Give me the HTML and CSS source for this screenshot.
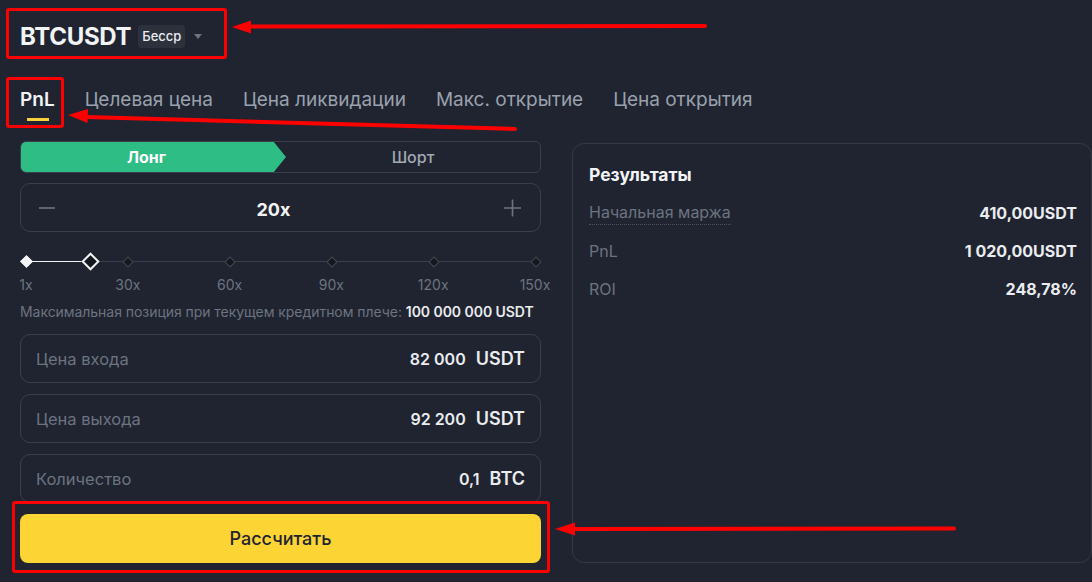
FILE: index.html
```html
<!DOCTYPE html>
<html lang="ru">
<head>
    <meta charset="UTF-8">
    <meta name="viewport" content="width=device-width, initial-scale=1.0">
    <title>Калькулятор BTCUSDT</title>
    <link rel="stylesheet" href="styles.css">
</head>
<body>
    <div class="page">
        <header class="symbol">
            <span class="symbol-name">BTCUSDT</span>
            <span class="badge">Бесср</span>
            <span class="caret"></span>
        </header>

        <nav class="tabs">
            <span class="tab active">PnL</span>
            <span class="tab">Целевая цена</span>
            <span class="tab">Цена ликвидации</span>
            <span class="tab">Макс. открытие</span>
            <span class="tab">Цена открытия</span>
        </nav>

        <main class="calc">
            <section class="form">
                <div class="side-toggle">
                    <div class="side long">Лонг</div>
                    <div class="side short">Шорт</div>
                </div>

                <div class="leverage">
                    <svg class="step" width="16" height="18" viewBox="0 0 16 18"><path d="M0 9h16" stroke="currentColor" stroke-width="1.6"/></svg>
                    <span class="leverage-value">20x</span>
                    <svg class="step" width="17" height="18" viewBox="0 0 17 18"><path d="M0 9h17M8.5 0.5v17" stroke="currentColor" stroke-width="1.6"/></svg>
                </div>

                <div class="slider">
                    <div class="track">
                        <div class="track-fill" style="width: 12.75%;"></div>
                        <span class="mark on" style="left: 0%;"></span>
                        <span class="mark" style="left: 20%;"></span>
                        <span class="mark" style="left: 40%;"></span>
                        <span class="mark" style="left: 60%;"></span>
                        <span class="mark" style="left: 80%;"></span>
                        <span class="mark" style="left: 100%;"></span>
                        <span class="handle" style="left: 12.75%;"></span>
                    </div>
                    <div class="slider-labels">
                        <span style="left: 0%;">1x</span>
                        <span style="left: 20%;">30x</span>
                        <span style="left: 40%;">60x</span>
                        <span style="left: 60%;">90x</span>
                        <span style="left: 80%;">120x</span>
                        <span style="left: 100%;">150x</span>
                    </div>
                </div>

                <p class="max-pos">Максимальная позиция при текущем кредитном плече: <b>100 000 000 USDT</b></p>

                <div class="field">
                    <span class="field-label">Цена входа</span>
                    <span class="field-value">82 000</span>
                    <span class="field-unit">USDT</span>
                </div>
                <div class="field">
                    <span class="field-label">Цена выхода</span>
                    <span class="field-value">92 200</span>
                    <span class="field-unit">USDT</span>
                </div>
                <div class="field">
                    <span class="field-label">Количество</span>
                    <span class="field-value">0,1</span>
                    <span class="field-unit">BTC</span>
                </div>

                <button class="calc-btn">Рассчитать</button>
            </section>

            <aside class="results">
                <h2>Результаты</h2>
                <div class="row">
                    <span class="row-label dotted">Начальная маржа</span>
                    <span class="row-value">410,00USDT</span>
                </div>
                <div class="row">
                    <span class="row-label">PnL</span>
                    <span class="row-value">1 020,00USDT</span>
                </div>
                <div class="row">
                    <span class="row-label">ROI</span>
                    <span class="row-value">248,78%</span>
                </div>
            </aside>
        </main>

        <!-- пометки поверх скриншота -->
        <svg class="marks" width="1092" height="582" viewBox="0 0 1092 582">
            <g fill="none" stroke="#f00" stroke-width="3">
                <rect x="7.5" y="9.5" width="218" height="48" rx="1.5"/>
                <rect x="7.5" y="78.5" width="55" height="48" rx="1.5"/>
                <rect x="13.5" y="502.5" width="535" height="69" rx="1.5"/>
            </g>
            <g stroke="#f00" stroke-width="4" stroke-linecap="round">
                <line x1="248" y1="26.5" x2="705" y2="26"/>
                <line x1="86" y1="117" x2="515" y2="129"/>
                <line x1="572" y1="529" x2="954" y2="528.5"/>
            </g>
            <g fill="#f00">
                <polygon points="232,27 251,20.5 251,33.5"/>
                <polygon points="68,115 88,109 87.5,123"/>
                <polygon points="555,529 575,522.5 575,535.5"/>
            </g>
        </svg>
    </div>
</body>
</html>
```

FILE: styles.css
```css
body {
    margin: 0;
    background-color: #1f2430;
    font-family: Inter, 'Noto Sans', sans-serif;
    color: #eaecef;
}
.page {
    position: relative;
    width: 1092px;
    height: 582px;
    padding: 21px 0 0 20px;
    box-sizing: border-box;
    overflow: hidden;
}
.symbol {
    display: flex;
    align-items: center;
    height: 30px;
}
.symbol-name {
    font-size: 24px;
    font-weight: 700;
    letter-spacing: -0.3px;
    color: #f2f3f5;
}
.badge {
    margin-left: 7px;
    padding: 0 4px;
    height: 23px;
    line-height: 23px;
    border-radius: 3px;
    background-color: #2c313c;
    font-size: 13px;
    font-weight: 500;
    color: #eaecef;
}
.caret {
    margin-left: 9px;
    width: 0;
    height: 0;
    border-left: 4px solid transparent;
    border-right: 4px solid transparent;
    border-top: 5px solid #6d7380;
}
.tabs {
    display: flex;
    gap: 30px;
    margin-top: 37px;
}
.tab {
    position: relative;
    font-size: 19px;
    line-height: 24px;
    padding-bottom: 9px;
    color: #9aa1ad;
}
.tab.active {
    color: #f2f3f5;
    font-weight: 600;
}
.tab.active::after {
    content: '';
    position: absolute;
    left: 7px;
    right: 6px;
    bottom: 0;
    height: 3px;
    background-color: #f7d23a;
}
.calc {
    display: flex;
    gap: 31px;
    margin-top: 20px;
}
.form {
    width: 521px;
    display: flex;
    flex-direction: column;
}
.side-toggle {
    display: flex;
    height: 32px;
    border: 1px solid #3a3f4b;
    border-radius: 6px;
    box-sizing: border-box;
    overflow: hidden;
}
.side {
    display: flex;
    align-items: center;
    justify-content: center;
    font-size: 16px;
}
.side.long {
    width: 266px;
    margin: -1px 0 -1px -1px;
    padding-right: 13px;
    box-sizing: border-box;
    background-color: #2ebd85;
    color: #fff;
    font-weight: 700;
    clip-path: polygon(0 0, calc(100% - 13px) 0, 100% 50%, calc(100% - 13px) 100%, 0 100%);
}
.side.short {
    flex: 1;
    color: #a3a8b2;
    font-weight: 500;
}
.leverage {
    display: flex;
    align-items: center;
    justify-content: space-between;
    height: 49px;
    margin-top: 10px;
    padding: 0 19px 0 18px;
    border: 1px solid #3a3f4b;
    border-radius: 10px;
    box-sizing: border-box;
}
.step {
    color: #6d7380;
}
.leverage-value {
    margin: 3px 12px 0 0;
    font-size: 18px;
    font-weight: 700;
    color: #f2f3f5;
}
.slider {
    margin: 29px 0 0 6px;
    width: 509px;
}
.track {
    position: relative;
    height: 1px;
    background-color: #3a3f4b;
}
.track-fill {
    height: 1px;
    background-color: #f2f3f5;
}
.mark {
    position: absolute;
    top: 0;
    width: 6px;
    height: 6px;
    margin: -3.5px 0 0 -3.5px;
    background-color: #14171d;
    border: 0.5px solid #454a56;
    transform: rotate(45deg);
}
.mark.on {
    width: 7px;
    height: 7px;
    margin: -4px 0 0 -4px;
    background-color: #f2f3f5;
    border-color: #f2f3f5;
}
.handle {
    position: absolute;
    top: 0;
    width: 9px;
    height: 9px;
    margin: -6.5px 0 0 -6.5px;
    background-color: #14171d;
    border: 2px solid #f2f3f5;
    transform: rotate(45deg);
}
.slider-labels {
    position: relative;
    height: 18px;
    margin-top: 14px;
}
.slider-labels span {
    position: absolute;
    top: 0;
    transform: translateX(-50%);
    font-size: 14px;
    line-height: 18px;
    color: #6d7380;
}
.max-pos {
    margin: 9px 0 0;
    font-size: 14px;
    line-height: 18px;
    letter-spacing: -0.05px;
    color: #6d7380;
    white-space: nowrap;
}
.max-pos b {
    font-weight: 600;
    color: #eaecef;
}
.field {
    display: flex;
    align-items: center;
    height: 49px;
    margin-top: 11px;
    padding: 0 15px;
    border: 1px solid #3a3f4b;
    border-radius: 10px;
    box-sizing: border-box;
}
.field + .field {
    margin-top: 11px;
}
.max-pos + .field {
    margin-top: 13px;
}
.field-label {
    flex: 1;
    font-size: 16.5px;
    color: #6d7380;
}
.field-value {
    font-size: 16px;
    font-weight: 600;
    color: #eaecef;
}
.field-unit {
    margin-left: 10px;
    font-size: 18px;
    font-weight: 600;
    color: #eaecef;
}
.calc-btn {
    height: 49px;
    margin-top: 11px;
    border: none;
    border-radius: 8px;
    background-color: #fcd535;
    font-family: inherit;
    font-size: 18px;
    font-weight: 500;
    color: #1f2430;
}
.results {
    width: 520px;
    height: 420px;
    margin-top: 2px;
    padding: 20px 14px 0 16px;
    border: 1px solid #343945;
    border-radius: 12px;
    box-sizing: border-box;
}
.results h2 {
    margin: 0 0 8px;
    font-size: 17.5px;
    line-height: 22px;
    font-weight: 700;
    color: #f2f3f5;
}
.row {
    display: flex;
    justify-content: space-between;
    align-items: center;
    height: 38px;
}
.row-label {
    font-size: 16px;
    color: #6d7380;
}
.row-label.dotted {
    padding-bottom: 2px;
    border-bottom: 1px dotted #4c515d;
}
.row-value {
    font-size: 16px;
    font-weight: 700;
    color: #eaecef;
}
.marks {
    position: absolute;
    top: 0;
    left: 0;
    pointer-events: none;
}
```
